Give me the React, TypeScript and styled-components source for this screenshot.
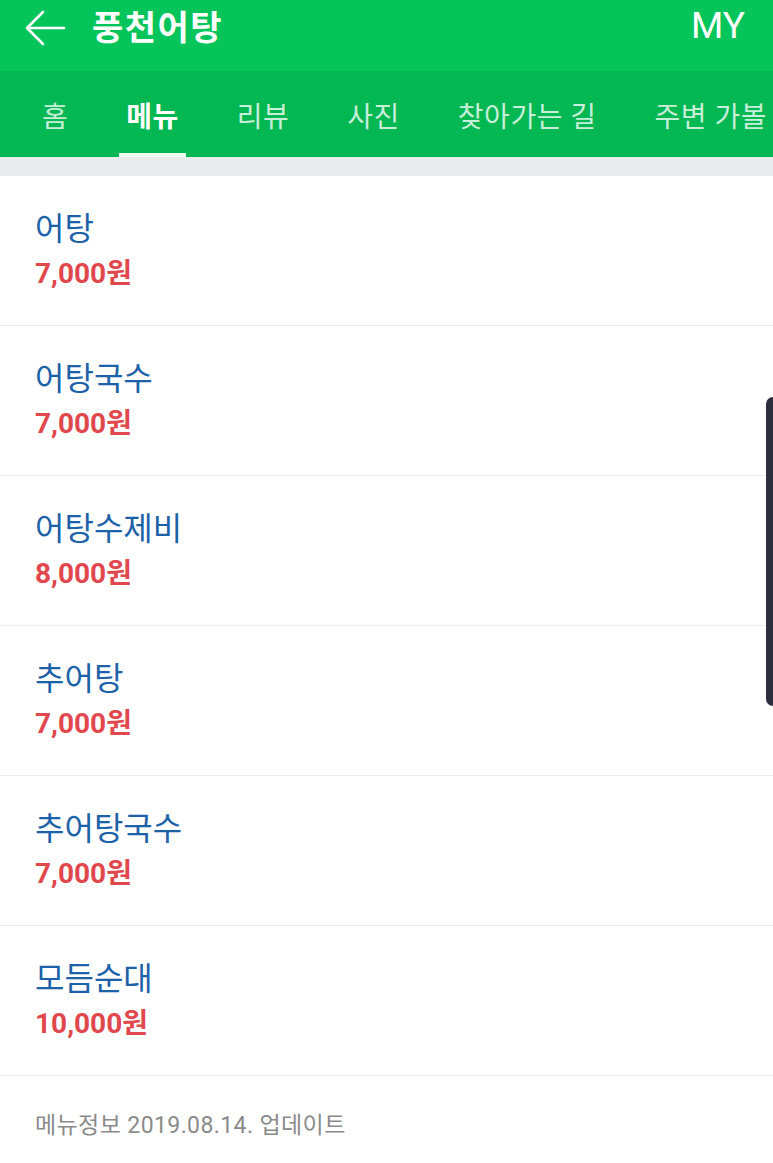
import styled, { createGlobalStyle } from 'styled-components';

const GlobalStyle = createGlobalStyle`
  html, body {
    margin: 0;
    padding: 0;
    background: #ffffff;
    font-family: Roboto, "Noto Sans CJK KR", "Noto Sans", sans-serif;
  }
  * { box-sizing: border-box; }
`;

const Page = styled.div`
  position: relative;
  width: 773px;
  height: 1163px;
  overflow: hidden;
  background: #ffffff;
`;

const Header = styled.header`
  height: 71px;
  background: #05c55a;
  display: flex;
  align-items: center;
  padding: 0 28px 15px 24px;
  color: #ffffff;
`;

const BackButton = styled.button`
  border: 0;
  background: none;
  padding: 0;
  width: 42px;
  height: 38px;
  display: flex;
  align-items: center;
  color: #ffffff;
`;

const Title = styled.h1`
  margin: 0 0 0 26px;
  font-size: 34px;
  font-weight: 700;
  line-height: 1;
  letter-spacing: 1.5px;
  flex: 1;
`;

const MyLink = styled.span`
  font-size: 37px;
  line-height: 1;
  margin-top: -6px;
`;

const TabBar = styled.nav`
  height: 86px;
  background: #03b752;
  display: flex;
  align-items: stretch;
  padding-left: 13px;
  white-space: nowrap;
  overflow: hidden;
`;

const Tab = styled.div<{ $active?: boolean }>`
  position: relative;
  padding: 2px 29px 0;
  display: flex;
  align-items: center;
  font-size: 28px;
  letter-spacing: 0.5px;
  font-weight: ${(p) => (p.$active ? 700 : 400)};
  color: ${(p) => (p.$active ? '#ffffff' : 'rgba(255,255,255,0.78)')};
  flex-shrink: 0;

  &::after {
    content: '';
    display: ${(p) => (p.$active ? 'block' : 'none')};
    position: absolute;
    left: 22px;
    right: 22px;
    bottom: 0;
    height: 4px;
    background: #eafaf0;
  }
`;

const Divider = styled.div`
  height: 19px;
  background: #e9ebee;
`;

const MenuList = styled.ul`
  list-style: none;
  margin: 0;
  padding: 0;
`;

const MenuRow = styled.li`
  height: 150px;
  border-bottom: 1px solid #ececec;
  padding: 34px 35px 0;
`;

const Name = styled.div`
  font-size: 32px;
  color: #1c62a8;
  line-height: 38px;
`;

const Price = styled.div`
  margin-top: 10px;
  font-size: 28px;
  font-weight: 700;
  color: #e0484d;
  line-height: 32px;
`;

const Footer = styled.div`
  padding: 36px 35px 0;
  font-size: 23px;
  color: #8a8a8a;
  line-height: 28px;
  letter-spacing: 0.4px;
`;

const ScrollHandle = styled.div`
  position: absolute;
  top: 397px;
  right: 0;
  width: 7px;
  height: 309px;
  background: #2d2d3e;
  border-radius: 8px 0 0 8px;
`;

const tabs = ['홈', '메뉴', '리뷰', '사진', '찾아가는 길', '주변 가볼'];

const menu = [
  { name: '어탕', price: '7,000원' },
  { name: '어탕국수', price: '7,000원' },
  { name: '어탕수제비', price: '8,000원' },
  { name: '추어탕', price: '7,000원' },
  { name: '추어탕국수', price: '7,000원' },
  { name: '모듬순대', price: '10,000원' },
];

export default function App() {
  return (
    <Page>
      <GlobalStyle />
      <Header>
        <BackButton aria-label="뒤로">
          <svg width="42" height="36" viewBox="0 0 42 36" fill="none">
            <path d="M40 18H3M19 2L3 18l16 16" stroke="#fff" strokeWidth="2.6" strokeLinecap="round" strokeLinejoin="round" />
          </svg>
        </BackButton>
        <Title>풍천어탕</Title>
        <MyLink>MY</MyLink>
      </Header>
      <TabBar>
        {tabs.map((t) => (
          <Tab key={t} $active={t === '메뉴'}>
            {t}
          </Tab>
        ))}
      </TabBar>
      <Divider />
      <MenuList>
        {menu.map((m) => (
          <MenuRow key={m.name}>
            <Name>{m.name}</Name>
            <Price>{m.price}</Price>
          </MenuRow>
        ))}
      </MenuList>
      <Footer>메뉴정보 2019.08.14. 업데이트</Footer>
      <ScrollHandle />
    </Page>
  );
}
